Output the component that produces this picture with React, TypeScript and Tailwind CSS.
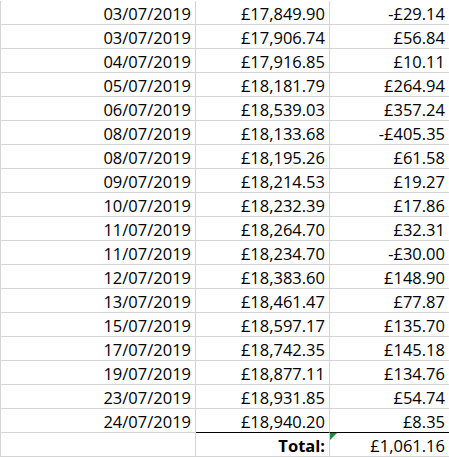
type Row = { date: string; balance: string; change: string };

const rows: Row[] = [
  { date: '03/07/2019', balance: '£17,849.90', change: '-£29.14' },
  { date: '03/07/2019', balance: '£17,906.74', change: '£56.84' },
  { date: '04/07/2019', balance: '£17,916.85', change: '£10.11' },
  { date: '05/07/2019', balance: '£18,181.79', change: '£264.94' },
  { date: '06/07/2019', balance: '£18,539.03', change: '£357.24' },
  { date: '08/07/2019', balance: '£18,133.68', change: '-£405.35' },
  { date: '08/07/2019', balance: '£18,195.26', change: '£61.58' },
  { date: '09/07/2019', balance: '£18,214.53', change: '£19.27' },
  { date: '10/07/2019', balance: '£18,232.39', change: '£17.86' },
  { date: '11/07/2019', balance: '£18,264.70', change: '£32.31' },
  { date: '11/07/2019', balance: '£18,234.70', change: '-£30.00' },
  { date: '12/07/2019', balance: '£18,383.60', change: '£148.90' },
  { date: '13/07/2019', balance: '£18,461.47', change: '£77.87' },
  { date: '15/07/2019', balance: '£18,597.17', change: '£135.70' },
  { date: '17/07/2019', balance: '£18,742.35', change: '£145.18' },
  { date: '19/07/2019', balance: '£18,877.11', change: '£134.76' },
  { date: '23/07/2019', balance: '£18,931.85', change: '£54.74' },
  { date: '24/07/2019', balance: '£18,940.20', change: '£8.35' },
];

// one spreadsheet cell, text right-aligned and sat near the bottom like Excel
function Cell({ children, className = '' }: { children?: React.ReactNode; className?: string }) {
  return (
    <div className={`h-[24px] flex items-end justify-end pr-[4px] pb-[2px] border-b border-[#d4d4d4] whitespace-nowrap ${className}`}>
      {children}
    </div>
  );
}

export default function App() {
  return (
    <div
      className="w-[449px] h-[457px] overflow-hidden bg-white pt-px text-black text-[16.5px] leading-none"
      style={{ fontFamily: '"Open Sans", "Noto Sans", sans-serif' }}
    >
      <div className="grid grid-cols-[196px_134px_119px]">
        {rows.map((r, i) => (
          <div key={i} className="contents">
            <Cell className="border-l border-r">{r.date}</Cell>
            <Cell className="border-r">{r.balance}</Cell>
            <Cell className="pr-[3px]">{r.change}</Cell>
          </div>
        ))}

        {/* total row */}
        <Cell className="border-l border-r" />
        <Cell className="border-r border-t border-t-black h-[25px] -mt-px font-bold">Total:</Cell>
        <div className="relative -mt-px">
          <Cell className="pr-[3px] border-t border-t-black h-[25px]">£1,061.16</Cell>
          <div className="absolute left-0 top-px w-0 h-0 border-t-[7px] border-t-[#1f8a3a] border-r-[7px] border-r-transparent" />
        </div>
      </div>
    </div>
  );
}
